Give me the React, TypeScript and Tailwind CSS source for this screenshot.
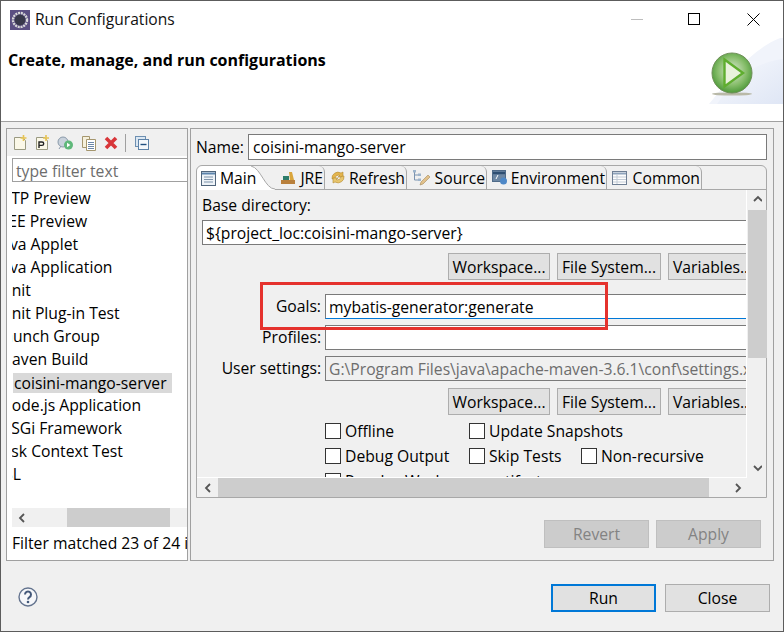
const font = "[font-family:'Open_Sans','Noto_Sans',sans-serif]"

const treeRows = [
  "HTTP Preview",
  "JEE Preview",
  "Java Applet",
  "Java Application",
  "JUnit",
  "JUnit Plug-in Test",
  "Launch Group",
  "Maven Build",
  "coisini-mango-server",
  "Node.js Application",
  "OSGi Framework",
  "Task Context Test",
  "XSL",
]

const rowCuts = [
  "-ml-[21px]",
  "-ml-[8px]",
  "-ml-[15px]",
  "-ml-[15px]",
  "-ml-[16px]",
  "-ml-[16px]",
  "-ml-[16px]",
  "-ml-[14px]",
  "ml-[1px]",
  "-ml-[12px]",
  "-ml-[13px]",
  "-ml-[18px]",
  "-ml-[17px]",
]

function Btn({ label, className }: { label: string; className: string }) {
  return (
    <div
      className={`flex shrink-0 items-center justify-center border border-[#adadad] bg-[#e1e1e1] pt-[2px] text-[15.7px] leading-none text-black ${className}`}
    >
      {label}
    </div>
  )
}

function Check({ label, className }: { label: string; className: string }) {
  return (
    <div className={`flex shrink-0 items-center gap-[4px] ${className}`}>
      <div className="h-[16px] w-[16px] border border-[#333] bg-white" />
      <span className="pt-[2px] text-[15.7px] leading-none text-black">{label}</span>
    </div>
  )
}

function ChevronSmall({ dir }: { dir: "l" | "r" | "u" | "d" }) {
  const d = {
    l: "M7 2 3 6l4 4",
    r: "M3 2l4 4-4 4",
    u: "M2 7l4-4 4 4",
    d: "M2 4l4 4 4-4",
  }[dir]
  return (
    <svg width="10" height="12" viewBox="0 0 10 12" className="shrink-0">
      <path d={d} fill="none" stroke="#555" strokeWidth="1.8" />
    </svg>
  )
}

function GoalButtons({ className }: { className: string }) {
  return (
    <div className={`ml-[246px] flex gap-[7px] ${className}`}>
      <Btn label="Workspace..." className="h-[27px] w-[102px]" />
      <Btn label="File System..." className="h-[27px] w-[104px]" />
      <Btn label="Variables..." className="h-[27px] w-[90px] !justify-start pl-[4px]" />
    </div>
  )
}

function FormRow({
  label,
  value,
  className,
  disabled,
  inputClass,
}: {
  label: string
  value: string
  className: string
  disabled?: boolean
  inputClass?: string
}) {
  return (
    <div className={`flex items-center ${className}`}>
      <div className="w-[119px] shrink-0 text-right text-[15.7px] leading-none text-black">
        {label}
      </div>
      <div
        className={`ml-[4px] flex h-[25px] w-[440px] shrink-0 items-center overflow-hidden whitespace-nowrap border border-[#7a7a7a] pl-[3px] pt-[2px] text-[15.7px] leading-none ${
          disabled ? "bg-[#f0f0f0] text-[#6d6d6d]" : "bg-white text-black"
        } ${inputClass ?? ""}`}
      >
        {value}
      </div>
    </div>
  )
}

function Tab({
  icon,
  label,
  width,
}: {
  icon: React.ReactNode
  label: string
  width: string
}) {
  return (
    <div
      className={`flex h-[24px] shrink-0 items-center justify-between rounded-tr-[6px] border-b border-r border-[#a8a8a8] pl-[5px] pr-[1px] text-[15.7px] leading-none text-black ${width}`}
    >
      {icon}
      <span className="pt-[2px]">{label}</span>
    </div>
  )
}

function CalloutBox() {
  return (
    <div className="absolute left-[259px] top-[281px] h-[48px] w-[348px] border-[3px] border-[#e5322d]" />
  )
}

export default function App() {
  return (
    <div
      className={`relative flex h-[632px] w-[784px] flex-col overflow-hidden border border-[#5c5c5c] bg-[#f0f0f0] ${font}`}
    >
      {/* title bar */}
      <div className="flex h-[37px] shrink-0 items-center bg-white">
        <svg width="20" height="20" viewBox="0 0 20 20" className="ml-[9px]">
          <rect width="20" height="20" fill="#5b4f82" />
          <circle cx="10" cy="10" r="7" fill="none" stroke="#d8d8d8" strokeWidth="2.4" strokeDasharray="2 .8" />
          <circle cx="10" cy="10" r="5.4" fill="#38384a" />
        </svg>
        <span className="ml-[5px] text-[15.6px] leading-none text-[#111]">Run Configurations</span>
        <svg width="13" height="13" viewBox="0 0 13 13" className="ml-[456px]">
          <path d="M0 6.5h12" stroke="#bdbdbd" />
        </svg>
        <svg width="13" height="13" viewBox="0 0 13 13" className="ml-[44px]">
          <rect x=".5" y=".5" width="11" height="11" fill="none" stroke="#000" />
        </svg>
        <svg width="13" height="13" viewBox="0 0 13 13" className="ml-[46px]">
          <path d="M.5.5l12 12M12.5.5l-12 12" stroke="#000" />
        </svg>
      </div>

      {/* banner */}
      <div className="relative flex h-[84px] shrink-0 overflow-hidden border-b border-[#a0a0a0] bg-white">
        <div className="ml-[7px] mt-[11px] text-[16px] font-bold leading-[22px] text-black">
          Create, manage, and run configurations
        </div>
        <svg width="76" height="68" viewBox="0 0 76 68" className="absolute right-0 top-[-1px]">
          <defs>
            <radialGradient id="orb" cx="50%" cy="45%" r="55%">
              <stop offset="0%" stopColor="#dfead8" />
              <stop offset="65%" stopColor="#86bd6a" />
              <stop offset="100%" stopColor="#4e9a3a" />
            </radialGradient>
            <linearGradient id="wash" x1="0" y1="0" x2="1" y2="1">
              <stop offset="0%" stopColor="#f7f9fd" />
              <stop offset="100%" stopColor="#dfe6f5" />
            </linearGradient>
          </defs>
          <path d="M2 67C24 40 46 10 76 0V67z" fill="#f1f4fb" />
          <path d="M10 67C28 40 50 25 76 22V67z" fill="url(#wash)" />
          <ellipse cx="25" cy="57" rx="20" ry="1.6" fill="#b9b9a8" />
          <circle cx="25" cy="36" r="20" fill="url(#orb)" stroke="#6f8f58" strokeWidth="1" />
          <path d="M17.5 22.5 36 36 17.5 49.5z" fill="#e9f2dc" stroke="#5fae2f" strokeWidth="2.4" />
        </svg>
      </div>

      {/* body */}
      <div className="flex h-[462px] shrink-0 pl-[5px] pt-[6px]">
        {/* launch config tree */}
        <div className="flex h-[433px] w-[182px] shrink-0 flex-col border border-[#a0a0a0] bg-white">
          <div className="flex h-[27px] shrink-0 items-center gap-[7px] bg-[#f0f0f0] pl-[6px]">
            <svg width="15" height="16" viewBox="0 0 15 16">
              <path d="M1.5 2.5h8l3 3v9h-11z" fill="#fbf8e8" stroke="#9a9a82" />
              <path d="M10.5 0v6M7.5 3h6" stroke="#e6c455" strokeWidth="1.6" />
            </svg>
            <svg width="15" height="16" viewBox="0 0 15 16">
              <path d="M1.5 2.5h8l3 3v9h-11z" fill="#fbf8e8" stroke="#9a9a82" />
              <path d="M11 0v6M8 3h6" stroke="#e6c455" strokeWidth="1.6" />
              <path d="M4 13V7h3a1.5 1.5 0 0 1 0 3.4H4" fill="none" stroke="#222" strokeWidth="1.4" />
            </svg>
            <svg width="17" height="16" viewBox="0 0 17 16">
              <circle cx="6" cy="7" r="5" fill="#c9d2dc" stroke="#8a9aaa" />
              <path d="M2 14l2-3" stroke="#8a9aaa" />
              <circle cx="11.5" cy="10" r="4.5" fill="#5fb87a" />
              <path d="M10 7.8l3.4 2.2-3.4 2.2z" fill="#fff" />
            </svg>
            <svg width="16" height="16" viewBox="0 0 16 16">
              <path d="M1.5 1.5h7v11h-7z" fill="#f5f0dc" stroke="#a5966e" />
              <path d="M5.5 4.5h9v11h-9z" fill="#fff" stroke="#a5966e" />
              <path d="M7 7.5h6M7 9.5h6M7 11.5h6M7 13.5h6" stroke="#6c87a8" />
            </svg>
            <svg width="14" height="14" viewBox="0 0 14 14">
              <path d="M2 2l10 10M12 2 2 12" stroke="#d8363a" strokeWidth="3.6" />
            </svg>
            <div className="h-[18px] w-px bg-[#a0a0a0]" />
            <svg width="14" height="14" viewBox="0 0 14 14" className="ml-[2px]">
              <rect x=".5" y=".5" width="10" height="10" fill="#dbe7f2" stroke="#6d8fb1" />
              <rect x="3.5" y="3.5" width="10" height="10" fill="#f4f8fc" stroke="#5d82a8" />
              <path d="M5.5 8.5h6" stroke="#1f4f80" strokeWidth="1.4" />
            </svg>
          </div>
          <div className="ml-[5px] mt-[2px] flex h-[24px] shrink-0 items-center overflow-hidden whitespace-nowrap border border-r-0 border-[#a0a0a0] pl-[3px] pt-[3px] text-[15.7px] leading-none text-[#6d6d6d]">
            type filter text
          </div>
          <div className="mt-[5px] flex h-[299px] shrink-0 flex-col overflow-hidden pl-[5px]">
            {treeRows.map((row, i) => (
              <div
                key={row}
                className="flex h-[23px] shrink-0 items-center overflow-hidden whitespace-nowrap text-[15.7px] leading-none text-black"
              >
                <span
                  className={`block ${rowCuts[i]} ${
                    row.startsWith("coisini") ? "w-[159px] bg-[#d9d9d9] pl-[1px] leading-[20px]" : ""
                  }`}
                >
                  {row}
                </span>
              </div>
            ))}
          </div>
          <div className="ml-[5px] mt-[22px] flex h-[19px] shrink-0 items-center bg-[#f0f0f0]">
            <div className="ml-[5px] w-[50px]">
              <ChevronSmall dir="l" />
            </div>
            <div className="h-[19px] w-[103px] bg-[#cdcdcd]" />
          </div>
          <div className="ml-[5px] mt-[6px] overflow-hidden whitespace-nowrap text-[15.7px] leading-[20px] text-black">
            Filter matched 23 of 24 items
          </div>
        </div>

        {/* right pane */}
        <div className="ml-[2px] flex h-[433px] w-[584px] shrink-0 flex-col border border-[#a0a0a0] pl-[5px]">
          <div className="mt-[5px] flex h-[26px] shrink-0 items-center">
            <span className="w-[52px] pt-[2px] text-[15.7px] leading-none text-black">Name:</span>
            <div className="flex h-[26px] w-[519px] items-center border border-[#7a7a7a] bg-white pl-[4px] pt-[2px] text-[15.7px] leading-none text-black">
              coisini-mango-server
            </div>
          </div>

          <div className="mt-[5px] flex h-[333px] w-[571px] shrink-0 flex-col rounded-t-[6px] border border-[#a8a8a8]">
            <div className="flex h-[24px] shrink-0">
              <div className="relative flex h-[24px] w-[78px] shrink-0 items-center gap-[4px] rounded-tl-[6px] bg-white pl-[4px] text-[15.7px] leading-none text-black">
                <svg width="15" height="15" viewBox="0 0 15 15">
                  <rect x=".5" y=".5" width="14" height="14" fill="#eef3f8" stroke="#50657c" />
                  <path d="M1 2.5h13" stroke="#5c84ad" strokeWidth="2" />
                  <path d="M3 6h9M3 8.5h9M3 11h9" stroke="#7d93aa" />
                </svg>
                <span className="pt-[2px]">Main</span>
                <svg width="24" height="24" viewBox="0 0 24 24" className="absolute right-0 top-0">
                  <path d="M0 0C10 2 14 23 24 23V24H24V0z" fill="#f0f0f0" />
                  <path d="M0 0C10 2 14 23 24 23" fill="none" stroke="#a8a8a8" />
                </svg>
              </div>
              <Tab
                width="w-[50px]"
                icon={
                  <svg width="16" height="14" viewBox="0 0 16 14">
                    <path d="M1 9h14v4H1z" fill="#b9803c" />
                    <path d="M3 5h6v4H3z" fill="#2e7d6b" />
                    <path d="M9 1l3 0 2 8h-4z" fill="#d9a53c" />
                  </svg>
                }
                label="JRE"
              />
              <Tab
                width="w-[82px]"
                icon={
                  <svg width="16" height="15" viewBox="0 0 16 15">
                    <path d="M2 9a6 6 0 0 1 9-6l2-1v5H8l2-1.5a3.5 3.5 0 0 0-5 3z" fill="#e4b54e" stroke="#b38a30" strokeWidth=".6" />
                    <path d="M14 6a6 6 0 0 1-9 6l-2 1V8h5l-2 1.5a3.5 3.5 0 0 0 5-3z" fill="#e8c66e" stroke="#b38a30" strokeWidth=".6" />
                  </svg>
                }
                label="Refresh"
              />
              <Tab
                width="w-[80px]"
                icon={
                  <svg width="18" height="16" viewBox="0 0 18 16">
                    <path d="M2.5 1v9h4M2.5 5h4" fill="none" stroke="#7a93b0" />
                    <path d="M1 0h3v2.5H1zM6 3.5h3V6H6zM6 8.5h3V11H6z" fill="#9db4cc" />
                    <path d="M8 15l1-3 7-7 2 2-7 7z" fill="#e2c18b" stroke="#a58a5a" strokeWidth=".6" />
                  </svg>
                }
                label="Source"
              />
              <Tab
                width="w-[120px]"
                icon={
                  <svg width="15" height="15" viewBox="0 0 15 15">
                    <rect x=".5" y=".5" width="13" height="11" fill="#6d87a3" stroke="#506b89" />
                    <path d="M1 3h12" stroke="#2f4f72" strokeWidth="2.4" />
                    <path d="M4 9l2-4" stroke="#fff" />
                    <circle cx="11.5" cy="11" r="3.5" fill="#4e88c7" />
                  </svg>
                }
                label="Environment"
              />
              <Tab
                width="w-[95px]"
                icon={
                  <svg width="15" height="14" viewBox="0 0 15 14">
                    <rect x=".5" y=".5" width="14" height="13" fill="#fdfdfd" stroke="#6f7f94" />
                    <path d="M1 2.5h13" stroke="#8ea3bb" strokeWidth="2" />
                    <path d="M1 6h13M1 8.5h13M1 11h13M5 3v10" stroke="#c3ccd6" />
                  </svg>
                }
                label="Common"
              />
              <div className="h-[24px] flex-1 border-b border-[#a8a8a8]" />
            </div>

            <div className="flex h-[307px] shrink-0 flex-col">
              <div className="flex h-[288px] shrink-0">
                <div className="h-[288px] w-[550px] shrink-0 overflow-hidden border-b border-r border-white">
                  <div className="w-[620px] pl-[5px]">
                    <div className="flex h-[30px] items-start pt-[5px] text-[15.7px] leading-[20px] text-black">
                      Base directory:
                    </div>
                    <div className="flex h-[25px] w-[560px] items-center overflow-hidden border border-[#7a7a7a] bg-white pl-[3px] pt-[2px] text-[15.7px] leading-none text-black">
                      {"${project_loc:coisini-mango-server}"}
                    </div>
                    <GoalButtons className="mt-[8px]" />
                    <FormRow
                      label="Goals:"
                      value="mybatis-generator:generate"
                      className="mt-[14px]"
                      inputClass="border-b-[#0078d7]"
                    />
                    <FormRow label="Profiles:" value="" className="mt-[6px]" />
                    <FormRow
                      label="User settings:"
                      value={"G:\\Program Files\\java\\apache-maven-3.6.1\\conf\\settings.xml"}
                      className="mt-[6px]"
                      disabled
                    />
                    <GoalButtons className="mt-[7px]" />
                    <div className="ml-[123px] mt-[8px] flex flex-col gap-[9px]">
                      <div className="flex h-[16px]">
                        <Check label="Offline" className="w-[144px]" />
                        <Check label="Update Snapshots" className="w-[180px]" />
                      </div>
                      <div className="flex h-[16px]">
                        <Check label="Debug Output" className="w-[144px]" />
                        <Check label="Skip Tests" className="w-[112px]" />
                        <Check label="Non-recursive" className="w-[140px]" />
                      </div>
                      <div className="flex h-[16px]">
                        <Check label="Resolve Workspace artifacts" className="w-[300px]" />
                      </div>
                    </div>
                  </div>
                </div>
                <div className="flex h-[288px] w-[20px] shrink-0 flex-col items-center">
                  <div className="flex h-[20px] items-center">
                    <ChevronSmall dir="u" />
                  </div>
                  <div className="h-[148px] w-[19px] bg-[#cdcdcd]" />
                  <div className="mt-auto flex h-[20px] items-center">
                    <ChevronSmall dir="d" />
                  </div>
                </div>
              </div>
              <div className="flex h-[19px] shrink-0 items-center">
                <div className="flex w-[21px] justify-center">
                  <ChevronSmall dir="l" />
                </div>
                <div className="h-[19px] w-[491px] bg-[#cdcdcd]" />
                <div className="flex flex-1 justify-center">
                  <ChevronSmall dir="r" />
                </div>
              </div>
            </div>
          </div>

          <div className="ml-[348px] mt-[22px] flex gap-[7px]">
            <Btn label="Revert" className="h-[28px] w-[105px] !border-[#bfbfbf] !bg-[#cccccc] !text-[#838383]" />
            <Btn label="Apply" className="h-[28px] w-[105px] !border-[#bfbfbf] !bg-[#cccccc] !text-[#838383]" />
          </div>
        </div>
      </div>

      {/* footer */}
      <div className="flex flex-1 items-start">
        <svg width="20" height="20" viewBox="0 0 20 20" className="ml-[17px] mt-[3px]">
          <circle cx="10" cy="10" r="9" fill="#f6f7fa" stroke="#64748f" strokeWidth="1.4" />
          <path d="M7 7.5a3 3 0 1 1 4.5 2.6c-1 .6-1.5 1.1-1.5 2.4" fill="none" stroke="#43587a" strokeWidth="2" />
          <circle cx="10" cy="15" r="1.3" fill="#43587a" />
        </svg>
        <div className="ml-[513px] mt-0 flex gap-[9px]">
          <Btn label="Run" className="h-[28px] w-[105px] !border-2 !border-[#0078d7]" />
          <Btn label="Close" className="h-[28px] w-[105px]" />
        </div>
      </div>

      <CalloutBox />
    </div>
  )
}
